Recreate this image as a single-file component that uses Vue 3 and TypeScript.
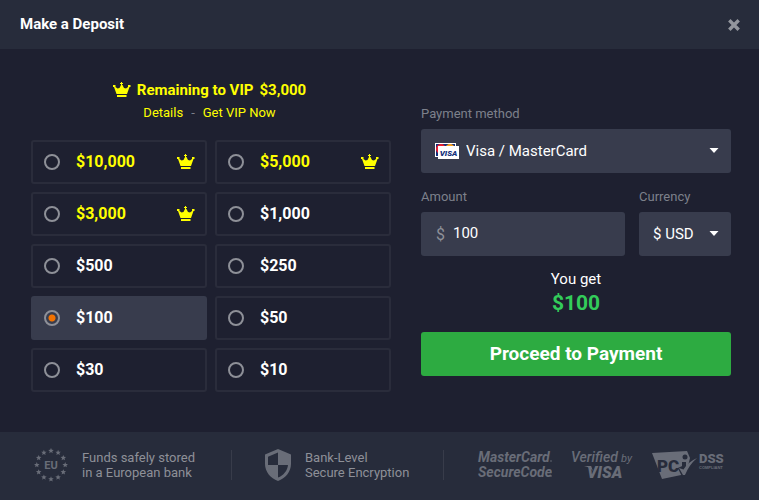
<script setup lang="ts">
import { ref, computed } from 'vue'

interface Preset {
  value: number
  vip: boolean
}

const presets: Preset[] = [
  { value: 10000, vip: true },
  { value: 5000, vip: true },
  { value: 3000, vip: true },
  { value: 1000, vip: false },
  { value: 500, vip: false },
  { value: 250, vip: false },
  { value: 100, vip: false },
  { value: 50, vip: false },
  { value: 30, vip: false },
  { value: 10, vip: false },
]

const amount = ref<number>(100)
const method = ref('card')
const currency = ref('usd')

const format = (n: number): string => '$' + Number(n || 0).toLocaleString('en-US')
const youGet = computed(() => format(amount.value))

const crownPath =
  'M8 0h1v1h1v1H9v1h.5L11 6l2 .5L15 5V3h2.500v2h-1L14 12H3.500L1 5H0V3h2.500v2l2 1.500 2-.5L8 3V2H7V1h1zM4 13h9.500v2H4z'

// Twelve five-pointed stars around the EU badge
const starPoints = (cx: number, cy: number): string =>
  Array.from({ length: 10 }, (_, i) => {
    const r = i % 2 ? 1.3 : 2.9
    const a = (Math.PI / 5) * i - Math.PI / 2
    return `${(cx + r * Math.cos(a)).toFixed(2)},${(cy + r * Math.sin(a)).toFixed(2)}`
  }).join(' ')

const stars = Array.from({ length: 12 }, (_, i) => {
  const a = (Math.PI / 6) * i
  return starPoints(17 + 14.2 * Math.cos(a), 17 + 14.2 * Math.sin(a))
})
</script>

<template>
  <form class="deposit" @submit.prevent>
    <header class="top">
      <h1>Make a Deposit</h1>
      <button type="button" class="close" aria-label="Close">
        <svg width="12" height="12" viewBox="0 0 12 12">
          <path d="M1.3 1.3 10.7 10.7M10.7 1.3 1.3 10.7" stroke="currentColor" stroke-width="3.4" />
        </svg>
      </button>
    </header>

    <main class="body">
      <section class="left">
        <div class="vip">
          <svg class="crown" width="18" height="16" viewBox="0 0 18 16">
            <path :d="crownPath" />
          </svg>
          <strong>Remaining to VIP</strong>
          <strong>$3,000</strong>
        </div>
        <nav class="links">
          <a href="#details">Details</a>
          <span>-</span>
          <a href="#vip">Get VIP Now</a>
        </nav>

        <div class="grid" role="radiogroup" aria-label="Deposit amount">
          <label
            v-for="p in presets"
            :key="p.value"
            class="tile"
            :class="{ active: amount === p.value, gold: p.vip }"
          >
            <input v-model="amount" type="radio" name="preset" :value="p.value" />
            <span class="price">{{ format(p.value) }}</span>
            <svg v-if="p.vip" class="crown" width="18" height="16" viewBox="0 0 18 16">
              <path :d="crownPath" />
            </svg>
          </label>
        </div>
      </section>

      <section class="right">
        <div class="field">
          <label for="method">Payment method</label>
          <div class="box">
            <svg class="cards" width="24" height="17" viewBox="0 0 24 17">
              <rect width="21" height="14" fill="#fff" />
              <rect x="1" y="1" width="19" height="12" fill="#14307c" />
              <circle cx="6" cy="6" r="5" fill="#ee1c2e" />
              <circle cx="15" cy="6" r="5" fill="#f9a01b" />
              <rect x="3" y="3" width="21" height="13" fill="#fff" />
              <text x="13.500" y="12.500" text-anchor="middle" class="mini-visa">VISA</text>
            </svg>
            <select id="method" v-model="method" class="with-cards">
              <option value="card">Visa / MasterCard</option>
            </select>
            <svg class="caret" width="10" height="5" viewBox="0 0 10 5"><path d="M.5 0h9L5 5z" /></svg>
          </div>
        </div>

        <div class="pair">
          <div class="field">
            <label for="amount">Amount</label>
            <div class="box">
              <span class="sign">$</span>
              <input id="amount" v-model.number="amount" type="text" inputmode="decimal" />
            </div>
          </div>
          <div class="field currency">
            <label for="currency">Currency</label>
            <div class="box">
              <select id="currency" v-model="currency">
                <option value="usd">$ USD</option>
              </select>
              <svg class="caret" width="10" height="5" viewBox="0 0 10 5"><path d="M.5 0h9L5 5z" /></svg>
            </div>
          </div>
        </div>

        <div class="get">
          <span>You get</span>
          <output for="amount">{{ youGet }}</output>
        </div>
        <button type="submit" class="proceed">Proceed to Payment</button>
      </section>
    </main>

    <footer class="foot">
      <div class="trust funds">
        <svg width="34" height="34" viewBox="0 0 34 34">
          <polygon v-for="s in stars" :key="s" :points="s" />
          <text x="17" y="21" text-anchor="middle" class="eu">EU</text>
        </svg>
        <p>Funds safely stored<br />in a European bank</p>
      </div>
      <div class="trust bank">
        <svg width="26" height="32" viewBox="0 0 26 32">
          <path fill-rule="evenodd" d="M13 0 26 5.500V15C26 22.500 20.500 29.500 13 32 5.500 29.500 0 22.500 0 15V5.500zM13 3.500 3 7.700V16H13zM13 16V28.600C18.500 26.600 22.500 21.500 23 16z" />
        </svg>
        <p>Bank-Level<br />Secure Encryption</p>
      </div>
      <div class="logos">
        <svg width="75" height="38" viewBox="0 -4 75 38">
          <text x="1" y="12" class="mc">MasterCard</text>
          <text x="1" y="27" class="mc">SecureCode</text>
          <circle cx="74" cy="11" r=".8" />
          <circle cx="74" cy="26" r=".8" />
        </svg>
        <svg width="62" height="38" viewBox="0 -4 62 38">
          <text x="0" y="12" class="verified">Verified</text>
          <text x="50" y="12" class="by">by</text>
          <text x="16" y="28" class="visa">VISA</text>
          <path d="M13 16h7l2 5q-3-4-9-5z" />
        </svg>
        <svg width="74" height="38" viewBox="0 -4 74 38">
          <path d="M0 3 35 1 38 8 34 24 10 29z" />
          <g class="cut">
            <text x="5" y="22" class="pci">PC</text>
            <path d="M30 12h4v10h-4z" />
            <circle cx="33" cy="7" r="2.500" />
            <path d="M28 17 31.500 24 44 9" class="tick-edge" />
          </g>
          <path d="M27 18 31.500 19.500Q36 12 45 8 37 15 33 25H31z" />
          <text x="47" y="13" class="dss">DSS</text>
          <text x="47" y="19" class="comp">COMPLIANT</text>
        </svg>
      </div>
    </footer>
  </form>
</template>

<style>
body {
  background: #1e2030;
}
</style>

<style scoped>
.deposit {
  display: flex;
  flex-direction: column;
  min-height: 100vh;
  background: #1e2030;
  color: #fff;
  font-family: Roboto, "Liberation Sans", sans-serif;
  font-size: 15px;
}
.top {
  display: flex;
  align-items: center;
  justify-content: space-between;
  height: 49px;
  padding: 0 19px 0 20px;
  background: #272c3b;
}
h1 {
  margin: 0;
  padding-bottom: 2px;
  font-size: 15px;
  font-weight: 700;
  line-height: 20px;
}
.close {
  display: flex;
  padding: 0;
  border: 0;
  background: none;
  color: #93969d;
}
.body {
  display: flex;
  flex: 1;
  gap: 30px;
  padding: 30px 28px 40px 31px;
}
.left {
  flex: 36;
}
.right {
  flex: 31;
  padding-top: 24px;
}
.vip {
  display: flex;
  align-items: center;
  justify-content: center;
  gap: 6px;
  padding-right: 3px;
  line-height: 22px;
  color: #ff0;
}
.crown {
  flex: none;
  fill: #ff0;
}
.links {
  display: flex;
  justify-content: center;
  gap: 8px;
  padding-right: 3px;
  font-size: 13px;
  line-height: 24px;
  color: #7d808b;
}
.links a {
  color: #ff0;
  text-decoration: none;
}
.grid {
  display: grid;
  grid-template-columns: 1fr 1fr;
  gap: 8px;
  margin-top: 15px;
}
.tile {
  display: flex;
  align-items: center;
  box-sizing: border-box;
  height: 44px;
  padding: 0 10px 0 11px;
  border: 2px solid #2a2c3b;
  border-radius: 3px;
  font-size: 16px;
  font-weight: 700;
}
.tile.gold {
  color: #ff0;
}
.tile.active {
  border-color: #383c4d;
  background: #383c4d;
}
.tile input {
  appearance: none;
  flex: none;
  width: 16px;
  height: 16px;
  margin: 0 16px 0 0;
  border: 2px solid #8e9098;
  border-radius: 50%;
}
.tile input:checked {
  background: radial-gradient(circle, #f27200 3px, transparent 4px);
}
.price {
  flex: 1;
  padding-bottom: 2px;
}
.field {
  flex: 1;
}
.field label {
  display: block;
  margin-bottom: 4px;
  font-size: 13px;
  line-height: 22px;
  color: #7d808b;
}
.box {
  display: grid;
  align-items: center;
  height: 44px;
  border-radius: 3px;
  background: #383c4d;
}
.box > * {
  grid-area: 1 / 1;
}
.box select,
.box input {
  appearance: none;
  box-sizing: border-box;
  width: 100%;
  height: 44px;
  padding: 0 14px;
  border: 0;
  border-radius: 3px;
  outline: 0;
  background: none;
  color: #fff;
  font: inherit;
}
.box input {
  padding: 0 14px 2px 32px;
}
.box .with-cards {
  padding-left: 45px;
}
.cards {
  margin-left: 14px;
}
.caret {
  justify-self: end;
  margin: 0 12px 2px 0;
  fill: #fff;
  pointer-events: none;
}
.sign {
  margin-left: 15px;
  font-size: 16px;
  color: #8e9098;
}
.mini-visa {
  fill: #14307c;
  font: italic 900 8px Roboto, sans-serif;
}
.pair {
  display: flex;
  gap: 14px;
  margin-top: 13px;
}
.currency {
  flex: 0 0 92px;
}
.get {
  display: flex;
  flex-direction: column;
  align-items: center;
  margin: 12px 0 16px;
  line-height: 22px;
}
.get output {
  font-size: 21px;
  font-weight: 700;
  line-height: 26px;
  color: #33cc5a;
}
.proceed {
  width: 100%;
  height: 44px;
  padding: 0 0 2px;
  border: 0;
  border-radius: 3px;
  background: #2dab41;
  color: #fff;
  font: 700 19px Roboto, "Liberation Sans", sans-serif;
}
.foot {
  display: flex;
  align-items: center;
  box-sizing: border-box;
  height: 68px;
  padding: 0 33px 3px 34px;
  background: #272c3b;
  fill: #696d78;
}
.trust {
  display: flex;
  align-items: center;
  height: 30px;
  border-right: 1px solid #383c4a;
  font-size: 13px;
  line-height: 15px;
  color: #8e9098;
}
.trust p {
  margin: 0;
  white-space: nowrap;
}
.trust svg {
  flex: none;
}
.funds {
  gap: 14px;
  padding-right: 36px;
}
.bank {
  gap: 14px;
  padding: 0 34px 0 33px;
}
.logos {
  display: flex;
  flex: 1;
  align-items: center;
  justify-content: space-between;
  padding-left: 33px;
}
.eu {
  font: 700 11px Roboto, sans-serif;
}
.mc {
  font: italic 700 14px Roboto, sans-serif;
}
.verified {
  font: italic 500 14px Roboto, sans-serif;
}
.by {
  font: italic 400 11px Roboto, sans-serif;
}
.visa {
  font: italic 900 16px Roboto, sans-serif;
}
.cut {
  fill: #272c3b;
}
.pci {
  font: 900 17px Roboto, sans-serif;
}
.tick-edge {
  fill: none;
  stroke: #272c3b;
  stroke-width: 5;
}
.dss {
  font: 900 13px Roboto, sans-serif;
}
.comp {
  font: 700 4px "Liberation Sans", sans-serif;
}
</style>
